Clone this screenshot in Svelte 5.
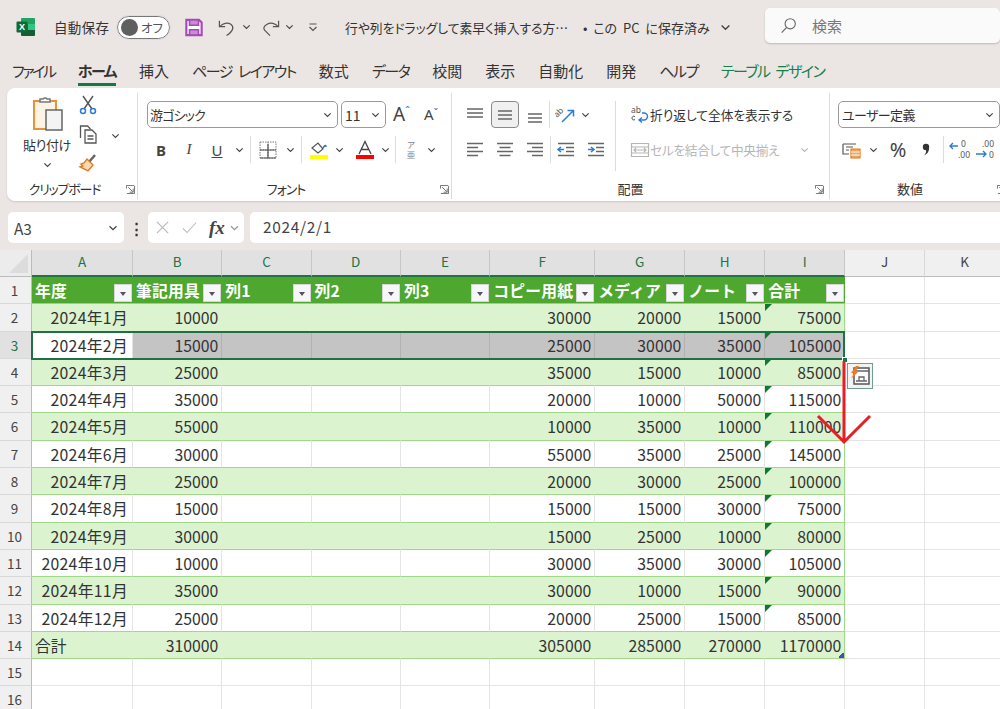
<script>
  const columns = [
    { id: 'A', on: true }, { id: 'B', on: true }, { id: 'C', on: true }, { id: 'D', on: true },
    { id: 'E', on: true }, { id: 'F', on: true }, { id: 'G', on: true }, { id: 'H', on: true },
    { id: 'I', on: true }, { id: 'J', on: false }, { id: 'K', on: false }
  ];
  const heads = ['年度', '筆記用具', '列1', '列2', '列3', 'コピー用紙', 'メディア', 'ノート', '合計'];
  const rows = [
    ['2024年1月', 10000, 30000, 20000, 15000, 75000],
    ['2024年2月', 15000, 25000, 30000, 35000, 105000],
    ['2024年3月', 25000, 35000, 15000, 10000, 85000],
    ['2024年4月', 35000, 20000, 10000, 50000, 115000],
    ['2024年5月', 55000, 10000, 35000, 10000, 110000],
    ['2024年6月', 30000, 55000, 35000, 25000, 145000],
    ['2024年7月', 25000, 20000, 30000, 25000, 100000],
    ['2024年8月', 15000, 15000, 15000, 30000, 75000],
    ['2024年9月', 30000, 15000, 25000, 10000, 80000],
    ['2024年10月', 10000, 30000, 35000, 30000, 105000],
    ['2024年11月', 35000, 30000, 10000, 15000, 90000],
    ['2024年12月', 25000, 20000, 25000, 15000, 85000]
  ];
  const total = ['合計', 310000, 305000, 285000, 270000, 1170000];
  const tabs = [
    { label: 'ファイル', kana: true },
    { label: 'ホーム', kana: true, active: true },
    { label: '挿入' },
    { label: 'ページ レイアウト', kana: true },
    { label: '数式' },
    { label: 'データ', kana: true },
    { label: '校閲' },
    { label: '表示' },
    { label: '自動化' },
    { label: '開発' },
    { label: 'ヘルプ', kana: true },
    { label: 'テーブル デザイン', kana: true, design: true }
  ];

  // table columns: label, B, C, D, E, F, G, H, I
  function cells(r) {
    return [r[0], r[1], '', '', '', r[2], r[3], r[4], r[5]];
  }
</script>

{#snippet chev()}
  <svg class="chev" viewBox="0 0 10 6"><path d="M1.5 1.2 5 4.6l3.5-3.4" /></svg>
{/snippet}

{#snippet lines(kind)}
  <svg class="ico" viewBox="0 0 20 20">
    {#if kind === 'top'}
      <path class="ln" d="M2 4h16M2 8h16M2 12h16" />
    {:else if kind === 'mid'}
      <path class="ln" d="M3 6h14M3 10h14M3 14h14" />
    {:else if kind === 'bot'}
      <path class="ln" d="M3 9h14M3 13h14M3 17h14" />
    {:else if kind === 'left'}
      <path class="ln" d="M2 3.500h16M2 7.500h11M2 11.500h16M2 15.500h11" />
    {:else if kind === 'center'}
      <path class="ln" d="M2 3.500h16M4.500 7.500h11M2 11.500h16M4.500 15.500h11" />
    {:else}
      <path class="ln" d="M2 3.500h16M7 7.500h11M2 11.500h16M7 15.500h11" />
    {/if}
  </svg>
{/snippet}

{#snippet launcher()}
  <svg class="launch" viewBox="0 0 10 10"><path d="M.5 4V.5H9M2.500 2.500l5 5M4 8h4V4M9.500 1v8.500H1" /></svg>
{/snippet}

<div class="app">
  <header class="title">
    <svg class="xl" viewBox="0 0 20 20">
      <path fill="#21a366" d="M6 1h12a1 1 0 0 1 1 1v5H5V2a1 1 0 0 1 1-1z" />
      <path fill="#107c41" d="M5 7h7v6H5z" />
      <path fill="#33c481" d="M12 7h7v6h-7z" />
      <path fill="#185c37" d="M5 13h14v5a1 1 0 0 1-1 1H6a1 1 0 0 1-1-1z" />
      <rect x="0.500" y="4.500" width="11" height="11" rx="1" fill="#0d6b3a" />
      <text x="6" y="13" class="xl-x">X</text>
    </svg>
    <span class="autosave">自動保存</span>
    <span class="toggle"><i></i><b>オフ</b></span>
    <svg class="save" viewBox="0 0 20 20">
      <path d="M1.500 1.500h14l3 3v14h-17z" fill="#fff" stroke="#a54bb4" stroke-width="2.400" />
      <path d="M5 1.500h10v6H5zM5 12.500h10v6H5z" fill="#c98ed2" stroke="#a54bb4" stroke-width="1.800" />
    </svg>
    <svg class="qa undo" viewBox="0 0 20 20"><path d="M1.500 3v6h6M2 9c3-3.500 8-4.500 11.500-2.500 3.500 2.500 3 7-4.500 12" /></svg>
    <span class="qa-chev">{@render chev()}</span>
    <svg class="qa redo" viewBox="0 0 20 20"><path d="M18.500 3v6h-6M18 9c-3-3.500-8-4.500-11.500-2.500C3 8.500 2 11 4 13l5.500 5.500" /></svg>
    <span class="qa-chev">{@render chev()}</span>
    <svg class="custom" viewBox="0 0 10 10"><path d="M1.500 2h7M1.500 5 5 8.500 8.500 5" /></svg>
    <span class="doc">行や列をドラッグして素早く挿入する方…</span>
    <span class="saved">• この PC に保存済み {@render chev()}</span>
    <div class="search">
      <svg viewBox="0 0 20 20"><circle cx="12" cy="8" r="6" /><path d="M7.500 12.500 2 18.500" /></svg>
      <span>検索</span>
    </div>
  </header>

  <nav class="tabs">
    {#each tabs as tab}
      <span class:active={tab.active} class:kana={tab.kana} class:design={tab.design}>{tab.label}</span>
    {/each}
  </nav>

  <section class="ribbon">
    <div class="group clip">
      <div class="body clip-body">
        <div class="paste">
          <svg viewBox="0 0 34 36">
            <path d="M4 5h22v28H4z" fill="#fdf3e4" stroke="#e8913a" stroke-width="2" />
            <path d="M10 6V3h3a2.500 2.500 0 0 1 4 0h3v3z" fill="#fff" stroke="#777" stroke-width="1.500" />
            <rect x="16" y="14" width="16" height="20" fill="#f4f4f4" stroke="#666" stroke-width="1.500" />
          </svg>
          <span>貼り付け</span>
          {@render chev()}
        </div>
        <div class="clip-small">
          <svg viewBox="0 0 20 20" class="ico">
            <path d="M5 1l9 13M15 1 6 14" fill="none" stroke="#555" stroke-width="1.400" />
            <circle cx="5" cy="16" r="2.500" fill="none" stroke="#2b7cd3" stroke-width="1.500" />
            <circle cx="15" cy="16" r="2.500" fill="none" stroke="#2b7cd3" stroke-width="1.500" />
          </svg>
          <svg viewBox="0 0 20 20" class="ico">
            <path d="M2.500 14V2h7l3 3" fill="none" stroke="#555" stroke-width="1.300" />
            <path d="M7 6h7l4 4v9H7zM9.500 12h6M9.500 15h6" fill="#fff" stroke="#555" stroke-width="1.300" />
          </svg>
          <svg viewBox="0 0 20 20" class="ico">
            <path d="M11 9l6-7" stroke="#666" stroke-width="2.500" />
            <path d="M9 6l6 6-5 6-8-4 3-1-2-2 3-1z" fill="#fbd9b5" stroke="#e07b1f" stroke-width="1.400" />
          </svg>
        </div>
        <span class="clip-chev">{@render chev()}</span>
      </div>
      <div class="foot">クリップボード {@render launcher()}</div>
    </div>

    <div class="group font">
      <div class="body stack">
        <div class="row">
          <div class="select font-name"><span>游ゴシック</span>{@render chev()}</div>
          <div class="select font-size"><span>11</span>{@render chev()}</div>
          <span class="grow big">A<sup>ˆ</sup></span>
          <span class="grow small">A<sup>ˇ</sup></span>
        </div>
        <div class="row lower">
          <span class="t letter bold">B</span>
          <span class="t letter ital">I</span>
          <span class="t letter under">U</span>
          <span class="c">{@render chev()}</span>
          <i class="sep"></i>
          <span class="t">
            <svg class="ico" viewBox="0 0 20 20">
              <path d="M2 2h16v16H2zM10 2v16M2 10h16" fill="none" stroke="#777" stroke-width="1" stroke-dasharray="1.500 1" />
              <path d="M2 18h16M10 4v14M2 10h16" stroke="#555" stroke-width="1.200" />
            </svg>
          </span>
          <span class="c">{@render chev()}</span>
          <i class="sep"></i>
          <span class="t">
            <svg class="ico" viewBox="0 0 20 20">
              <path d="M3 8l6-5 5 6-5 4z" fill="#fff" stroke="#555" stroke-width="1.200" />
              <path d="M14 8c2-3 3-3 3-1" fill="none" stroke="#2b7cd3" stroke-width="1.600" />
              <path d="M1 15h18v4H1z" fill="#ffff00" />
            </svg>
          </span>
          <span class="c narrow">{@render chev()}</span>
          <span class="t gap-l">
            <svg class="ico" viewBox="0 0 20 20">
              <path d="M4 14 10 1.500 16 14M6.500 9.500h7" fill="none" stroke="#444" stroke-width="1.300" />
              <path d="M1 15h18v4H1z" fill="#f00" />
            </svg>
          </span>
          <span class="c narrow">{@render chev()}</span>
          <i class="sep"></i>
          <span class="t phon"><small>ア</small><small>亜</small></span>
          <span class="c">{@render chev()}</span>
        </div>
      </div>
      <div class="foot">フォント {@render launcher()}</div>
    </div>

    <div class="group align">
      <div class="body split">
        <div class="stack left-part">
          <div class="row">
            <span class="t w30">{@render lines('top')}</span>
            <span class="t w28 pressed">{@render lines('mid')}</span>
            <span class="t w30">{@render lines('bot')}</span>
            <i class="sep tight"></i>
            <span class="t w30">
              <svg class="ico" viewBox="0 0 20 20">
                <text x="2" y="13" class="orient" transform="rotate(-45 2 13)">ab</text>
                <path d="M7 17 18 6M12.500 5.500H18.500V11.500" fill="none" stroke="#2b7cd3" stroke-width="1.500" />
              </svg>
            </span>
            <span class="c pull">{@render chev()}</span>
          </div>
          <div class="row lower">
            <span class="t w30">{@render lines('left')}</span>
            <span class="t w30">{@render lines('center')}</span>
            <span class="t w30">{@render lines('right')}</span>
            <i class="sep tight"></i>
            <span class="t w30">
              <svg class="ico" viewBox="0 0 20 20">
                <path class="ln" d="M2 3.500h16M10 7.500h8M10 11.500h8M2 15.500h16" />
                <path d="M8 9.500H2M5 7 2 9.500 5 12" fill="none" stroke="#2b7cd3" stroke-width="1.500" />
              </svg>
            </span>
            <span class="t w30">
              <svg class="ico" viewBox="0 0 20 20">
                <path class="ln" d="M2 3.500h16M10 7.500h8M10 11.500h8M2 15.500h16" />
                <path d="M2 9.500h6M5 7l3 2.500L5 12" fill="none" stroke="#2b7cd3" stroke-width="1.500" />
              </svg>
            </span>
          </div>
        </div>
        <i class="sep tall"></i>
        <div class="stack right-part">
          <div class="row wrap">
            <svg class="ico" viewBox="0 0 20 20">
              <text x="1" y="8" class="orient">ab</text>
              <path d="M5 11.500c-2-1-3 .5-3 1.500s1 3 3 1.500" fill="none" stroke="#555" stroke-width="1" />
              <path d="M9 15h5a3.500 3.500 0 0 0 0-7h-2M12 12.500 9 15l3 2.500" fill="none" stroke="#2b7cd3" stroke-width="1.400" />
            </svg>
            <span>折り返して全体を表示する</span>
          </div>
          <div class="row lower merge">
            <svg class="ico" viewBox="0 0 20 20">
              <path d="M1.500 3.500h17v13h-17zM1.500 7h17M1.500 13h17M4 10h12M6 8l-2 2 2 2M14 8l2 2-2 2" fill="none" stroke="#b5b5b5" stroke-width="1.200" />
            </svg>
            <span>セルを結合して中央揃え</span>
            {@render chev()}
          </div>
        </div>
      </div>
      <div class="foot">配置 {@render launcher()}</div>
    </div>

    <div class="group number">
      <div class="body stack">
        <div class="row"><div class="select fmt"><span>ユーザー定義</span>{@render chev()}</div></div>
        <div class="row lower">
          <span class="t">
            <svg class="ico" viewBox="0 0 20 20">
              <path d="M1 4h13M1 4v10h6M4 7h7M4 10h3" fill="none" stroke="#555" stroke-width="1.200" />
              <path d="M9 9h9v9H9z" fill="#f2a65e" stroke="#e07b1f" stroke-width="1.200" />
              <path d="M9 12h9M9 15h9" stroke="#fff" />
            </svg>
          </span>
          <span class="c tiny">{@render chev()}</span>
          <span class="t pct">%</span>
          <span class="t">
            <svg class="ico" viewBox="0 0 20 20">
              <circle cx="10" cy="7" r="3.200" fill="#333" />
              <path d="M13 7c.5 4-1.500 7-5 8.500 2-2 2.500-4 2-6z" fill="#333" />
            </svg>
          </span>
          <i class="sep"></i>
          <span class="t w26">
            <svg viewBox="0 0 22 22" class="dec-ico">
              <path d="M9 7H1M4 4 1 7l3 3" fill="none" stroke="#2b7cd3" stroke-width="1.400" />
              <text x="12" y="8">0</text><text x="9" y="19">.00</text>
            </svg>
          </span>
          <span class="t w26">
            <svg viewBox="0 0 22 22" class="dec-ico">
              <text x="7" y="8">.00</text><text x="14" y="19">0</text>
              <path d="M1 15h10M8 12l3 3-3 3" fill="none" stroke="#2b7cd3" stroke-width="1.400" />
            </svg>
          </span>
        </div>
      </div>
      <div class="foot">数値 {@render launcher()}</div>
    </div>
  </section>

  <section class="formula">
    <div class="box name"><span>A3</span>{@render chev()}</div>
    <span class="dots">⋮</span>
    <div class="box fx">
      <svg viewBox="0 0 16 16"><path d="M2 2l12 12M14 2 2 14" /></svg>
      <svg viewBox="0 0 18 16"><path d="M1 9l5 5L17 2" /></svg>
      <em>fx</em>
      {@render chev()}
    </div>
    <div class="box value"><span>2024/2/1</span></div>
  </section>

  <section class="sheet">
    <div class="corner"><i></i></div>
    {#each columns as col}
      <div class="colhead" class:on={col.on}>{col.id}</div>
    {/each}

    <div class="rowhead">1</div>
    {#each heads as head, i}
      <div class="th" class:end={i === 8}>
        <span>{head}</span>
        <i class="filter"></i>
      </div>
    {/each}
    <div class="gc"></div>
    <div class="gc"></div>

    {#each rows as row, r}
      <div class="rowhead" class:on={r === 1}>{r + 2}</div>
      {#each cells(row) as value, c}
        <div
          class="td"
          class:band={r % 2 === 0}
          class:sel={r === 1 && c > 0}
          class:active={r === 1 && c === 0}
          class:date={c === 0}
          class:end={c === 8}
          class:flag={c === 8}
        >{value}</div>
      {/each}
      <div class="gc"></div>
      <div class="gc"></div>
    {/each}

    <div class="rowhead">14</div>
    {#each cells(total) as value, c}
      <div class="td band last" class:lbl={c === 0} class:end={c === 8} class:grip={c === 8}>{value}</div>
    {/each}
    <div class="gc"></div>
    <div class="gc"></div>

    {#each [15, 16] as n}
      <div class="rowhead">{n}</div>
      {#each columns as col}
        <div class="gc"></div>
      {/each}
    {/each}

    <i class="selection"></i>
    <i class="fill-handle"></i>
    <svg class="quick" viewBox="0 0 26 26">
      <rect x="0.500" y="0.500" width="25" height="25" fill="#f3f3f3" stroke="#6f9f8a" />
      <path d="M7 5h15v16H7z" fill="#fff" stroke="#555" stroke-width="1.500" />
      <path d="M7 8h15M9 18h11M12 18v-4h5v4" fill="none" stroke="#666" stroke-width="1.300" />
      <path d="M9 3 4 10h3l-3 6 8-8H9l3-5z" fill="#ed7d1f" />
    </svg>
    <svg class="arrow" viewBox="0 0 60 90">
      <path d="M29 0v81M3 55l26 26 26-26" />
    </svg>
  </section>
</div>

<style>
  :global(body) {
    margin: 0;
    background: #ebe6e3;
  }

  .app {
    width: 1000px;
    height: 709px;
    overflow: hidden;
    background: #ebe6e3;
    color: #333;
    font-family: "Noto Sans CJK JP", "Noto Sans", sans-serif;
  }

  svg {
    display: block;
    flex: none;
  }

  .chev {
    width: 9px;
    height: 6px;
    fill: none;
    stroke: #444;
    stroke-width: 1.300;
  }

  .ico {
    width: 20px;
    height: 20px;
  }

  .ln {
    fill: none;
    stroke: #666;
    stroke-width: 1.300;
  }

  /* title bar */
  .title {
    height: 54px;
    display: flex;
    align-items: center;
    font-size: 13.500px;
    padding-left: 16px;
    font-feature-settings: "palt";
  }

  .title > * {
    flex: none;
  }

  .xl {
    width: 20px;
    height: 20px;
    margin-right: 18px;
  }

  .xl-x {
    font: bold 9px "Liberation Sans", sans-serif;
    fill: #fff;
    text-anchor: middle;
  }

  .autosave {
    width: 63px;
    letter-spacing: 0.300px;
  }

  .toggle {
    width: 53px;
    height: 23px;
    box-sizing: border-box;
    border: 1px solid #777;
    border-radius: 12px;
    background: #fff;
    display: flex;
    align-items: center;
    padding: 0 6px 0 3px;
    justify-content: space-between;
    outline: 1px solid #ddd;
  }

  .toggle i {
    width: 17px;
    height: 17px;
    border-radius: 50%;
    background: #5f5f5f;
  }

  .toggle b {
    font-weight: 400;
    font-size: 12.500px;
    color: #555;
  }

  .save {
    width: 18px;
    height: 19px;
    margin-left: 15px;
  }

  .qa {
    width: 19px;
    height: 19px;
    fill: none;
    stroke: #555;
    stroke-width: 1.300;
  }

  .undo {
    margin-left: 15px;
  }

  .redo {
    margin-left: 10px;
  }

  .qa-chev {
    margin-left: 5px;
  }

  .custom {
    width: 10px;
    height: 10px;
    margin-left: 14px;
    fill: none;
    stroke: #555;
    stroke-width: 1.200;
  }

  .doc {
    margin-left: 27px;
    width: 238px;
    font-size: 12.800px;
    white-space: nowrap;
  }

  .saved {
    width: 182px;
    font-size: 13px;
    display: flex;
    align-items: center;
    gap: 4px;
    white-space: pre;
    word-spacing: 3px;
  }

  .saved .chev {
    width: 11px;
    height: 7px;
  }

  .search {
    width: 235px;
    height: 35px;
    margin-top: -3px;
    background: #fafafa;
    border-radius: 5px;
    box-shadow: 0 1px 2px #0003;
    display: flex;
    align-items: center;
    padding-left: 15px;
    box-sizing: border-box;
    gap: 15px;
    color: #777;
    font-size: 15px;
  }

  .search svg {
    width: 17px;
    height: 17px;
    fill: none;
    stroke: #666;
    stroke-width: 1.300;
  }

  /* tabs */
  .tabs {
    height: 34px;
    display: flex;
    gap: 23px;
    padding-left: 12px;
    font-size: 15px;
    line-height: 33px;
    white-space: nowrap;
    font-feature-settings: "palt";
  }

  .tabs .kana {
    letter-spacing: -1.500px;
    word-spacing: 4px;
  }

  .tabs .kana:first-child {
    letter-spacing: -2.300px;
  }

  .tabs .active {
    font-weight: 700;
    position: relative;
  }

  .tabs .active::after {
    content: '';
    position: absolute;
    left: 0;
    right: 0;
    bottom: 2px;
    height: 3px;
    background: #107c41;
  }

  .tabs .design {
    color: #17804a;
  }

  /* ribbon */
  .ribbon {
    height: 113px;
    margin-left: 7px;
    width: 1010px;
    background: #fff;
    border-radius: 8px;
    box-shadow: 0 1px 2px #0002;
    display: flex;
    padding-top: 5px;
    box-sizing: border-box;
    overflow: hidden;
    font-feature-settings: "palt";
  }

  .group {
    display: flex;
    flex-direction: column;
    flex: none;
    box-sizing: border-box;
    height: 106px;
    border-right: 1px solid #dcdcdc;
  }

  .clip { width: 131px; }
  .font { width: 314px; padding-left: 9px; }
  .align { width: 378px; padding-left: 8px; }
  .number { width: 187px; padding-left: 8px; border-right: 0; }

  .body {
    height: 87px;
  }

  .foot {
    position: relative;
    text-align: center;
    font-size: 13px;
    line-height: 20px;
  }

  .clip .foot { padding-right: 15px; letter-spacing: -1.200px; }
  .font .foot { padding-right: 26px; letter-spacing: -1px; }
  .align .foot { padding-right: 28px; }
  .number .foot { padding-right: 35px; }

  .launch {
    position: absolute;
    right: 2px;
    top: 6px;
    width: 9px;
    height: 9px;
    fill: none;
    stroke: #666;
    stroke-width: 1;
  }

  .align .launch { right: 5px; }
  .number .launch { right: 11px; }

  .stack {
    display: flex;
    flex-direction: column;
    padding-top: 8px;
    box-sizing: border-box;
    gap: 8px;
  }

  .row {
    display: flex;
    align-items: center;
    height: 27px;
  }

  .sep {
    width: 1px;
    height: 27px;
    background: #dcdcdc;
    margin: 0 3px;
    flex: none;
  }

  .sep.tight {
    margin: 0;
  }

  .sep.tall {
    height: 70px;
    margin: 8px 4px 0 3px;
  }

  .t, .c {
    display: flex;
    align-items: center;
    justify-content: center;
    height: 27px;
    flex: none;
  }

  .t { width: 28px; }
  .c { width: 16px; }
  .c.narrow { width: 13px; }
  .c.tiny { width: 14px; }
  .c.pull { margin-left: -3px; }
  .w26 { width: 26px; }
  .w28 { width: 28px; }
  .w30 { width: 30px; }
  .gap-l { margin-left: 5px; }

  .pressed {
    background: #f0f0f0;
    box-sizing: border-box;
    border: 1px solid #8a8a8a;
    border-radius: 4px;
    margin: 0 1px;
  }

  .row:first-child .pressed + .w30 {
    width: 29px;
  }

  .select {
    height: 27px;
    box-sizing: border-box;
    border: 1px solid #9a9a9a;
    border-radius: 5px;
    display: flex;
    align-items: center;
    justify-content: space-between;
    padding: 0 5px 0 3px;
    font-size: 13px;
    flex: none;
  }

  .font-name { width: 191px; padding-left: 2px; letter-spacing: -0.800px; }
  .font-size { width: 45px; margin-left: 3px; font-size: 14px; }
  .fmt { width: 162px; margin-right: -10px; letter-spacing: -0.600px; }

  .grow {
    font-family: "Noto Sans", sans-serif;
    color: #444;
    line-height: 1;
    display: flex;
  }

  .grow sup {
    color: #2b7cd3;
    font-size: 11px;
    line-height: 1;
  }

  .big {
    font-size: 19px;
    margin-left: 7px;
    width: 30px;
  }

  .small {
    font-size: 15px;
    margin-left: 1px;
  }

  .letter {
    font-family: "Liberation Serif", serif;
    font-size: 15px;
    color: #444;
  }

  .bold {
    font-family: "Noto Sans", sans-serif;
    font-weight: 700;
  }

  .ital {
    font-style: italic;
  }

  .under {
    font-family: "Noto Sans", sans-serif;
    text-decoration: underline;
  }

  .phon {
    flex-direction: column;
    width: 24px;
    color: #888;
    gap: 1px;
  }

  .phon small {
    font-size: 8.500px;
    line-height: 9px;
    display: block;
  }

  /* clipboard */
  .clip-body {
    display: flex;
  }

  .paste {
    width: 71px;
    box-sizing: border-box;
    padding-left: 9px;
    display: flex;
    flex-direction: column;
    align-items: center;
    font-size: 13px;
    letter-spacing: -0.400px;
    white-space: nowrap;
  }

  .paste svg:first-child {
    width: 34px;
    height: 36px;
    margin-top: 3px;
  }

  .paste span {
    margin-top: 2px;
    line-height: 22px;
  }

  .paste .chev {
    margin-top: 6px;
  }

  .clip-small {
    display: flex;
    flex-direction: column;
    gap: 9px;
    padding-top: 2px;
  }

  .clip-chev {
    margin: 40px 0 0 13px;
  }

  /* alignment */
  .split {
    display: flex;
  }

  .left-part {
    width: 152px;
  }

  .right-part {
    width: 200px;
    padding-left: 10px;
  }

  .wrap, .merge {
    font-size: 12.700px;
    white-space: nowrap;
  }

  .merge {
    color: #b5b5b5;
    letter-spacing: -0.300px;
  }

  .merge .chev {
    stroke: #b5b5b5;
    margin-left: 21px;
  }

  .orient {
    font: 8.500px "Noto Sans", sans-serif;
    fill: #555;
  }

  .pct {
    font: 20px "Noto Sans", sans-serif;
    color: #444;
    margin-left: 4px;
  }

  .dec-ico {
    width: 24px;
    height: 22px;
  }

  .dec-ico text {
    font: 8.500px "Noto Sans", sans-serif;
    fill: #555;
  }

  /* formula bar */
  .formula {
    display: flex;
    align-items: center;
    height: 31px;
    margin: 11px 0 7px 8px;
  }

  .box {
    height: 31px;
    box-sizing: border-box;
    background: #fff;
    border-radius: 5px;
    display: flex;
    align-items: center;
    flex: none;
  }

  .name {
    width: 116px;
    justify-content: space-between;
    padding: 0 6px;
    font-size: 15.400px;
    color: #444;
  }

  .name .chev {
    width: 10px;
  }

  .dots {
    width: 24px;
    flex: none;
    text-align: center;
    font-weight: 700;
    font-size: 15px;
  }

  .fx {
    width: 96px;
    gap: 12px;
    padding-left: 7px;
  }

  .fx svg:nth-child(-n+2) {
    width: 15px;
    height: 15px;
    fill: none;
    stroke: #bbb;
    stroke-width: 1.300;
  }

  .fx em {
    font: italic 700 19px "Liberation Serif", serif;
    color: #444;
  }

  .fx .chev {
    width: 11px;
    stroke: #999;
    margin-left: -8px;
  }

  .value {
    width: 760px;
    margin-left: 6px;
    padding-left: 13px;
    font-size: 15.400px;
    letter-spacing: 0.700px;
    color: #444;
  }

  .value span {
    margin-top: -3px;
  }

  /* sheet */
  .sheet {
    position: relative;
    display: grid;
    grid-template-columns: 32px 101px 89.300px 89.300px 89.300px 89.300px 105px 90px 80px 80px 80px 80px;
    grid-template-rows: 27px repeat(16, 27.300px);
    width: 1000px;
    height: 459px;
    overflow: hidden;
    background: #fff;
    font-size: 15.800px;
  }

  .corner {
    background: #ececec;
    border-right: 1px solid #bbb;
    border-bottom: 1px solid #bbb;
    box-sizing: border-box;
    position: relative;
  }

  .corner i {
    position: absolute;
    right: 3px;
    bottom: 3px;
    border-style: solid;
    border-width: 0 0 19px 19px;
    border-color: transparent transparent #dcdcdc transparent;
  }

  .colhead {
    background: #f0f0f0;
    border-right: 1px solid #d8d8d8;
    border-bottom: 1px solid #bbb;
    box-sizing: border-box;
    text-align: center;
    line-height: 22px;
    font-size: 13.500px;
    color: #444;
  }

  .colhead.on {
    background: #e1e1e1;
    color: #217346;
    border-right-color: #c6c6c6;
    border-bottom: 2px solid #217346;
  }

  .rowhead {
    background: #f0f0f0;
    border-right: 1px solid #bbb;
    border-bottom: 1px solid #d8d8d8;
    box-sizing: border-box;
    text-align: center;
    line-height: 27px;
    font-size: 13.500px;
    color: #444;
    padding-right: 2px;
  }

  .rowhead.on {
    background: #e1e1e1;
    color: #217346;
  }

  .th {
    background: #4ea72e;
    color: #fff;
    font-weight: 700;
    font-size: 15.800px;
    line-height: 27px;
    padding-left: 3px;
    box-sizing: border-box;
    position: relative;
    white-space: nowrap;
    overflow: visible;
    border-bottom: 1px solid #8ed973;
    letter-spacing: 0.200px;
  }

  .filter {
    position: absolute;
    right: 1px;
    bottom: 1px;
    width: 18px;
    height: 18px;
    box-sizing: border-box;
    border: 1px solid #d6d6d6;
    background: #f7f7fb;
  }

  .filter::after {
    content: '';
    position: absolute;
    left: 5px;
    top: 7px;
    border-style: solid;
    border-width: 4px 3.500px 0;
    border-color: #555 transparent transparent;
  }

  .td {
    position: relative;
    box-sizing: border-box;
    text-align: right;
    padding-right: 3px;
    line-height: 27px;
    border-right: 1px solid #e4e4e4;
    border-bottom: 1px solid #9ed888;
    white-space: nowrap;
    color: #333;
  }

  .td.date {
    padding-right: 4px;
    letter-spacing: 0.300px;
  }

  .td.band {
    background: #dcf3d0;
    border-right-color: #dcf3d0;
  }

  .td.sel {
    background: #c4c4c4;
    border-right-color: #b2b2b2;
  }

  .td.active {
    background: #fff;
  }

  .td.end {
    border-right: 1px solid #9ed888;
  }

  .td.lbl {
    text-align: left;
    padding-left: 3px;
  }

  .td.flag::before {
    content: '';
    position: absolute;
    left: 0;
    top: 0;
    border-style: solid;
    border-width: 7px 7px 0 0;
    border-color: #0e7a2f transparent transparent;
  }

  .td.grip::after {
    content: '';
    position: absolute;
    right: 0;
    bottom: 0;
    width: 5px;
    height: 5px;
    background: linear-gradient(135deg, transparent 35%, #3f51b5 35%);
  }

  .gc {
    box-sizing: border-box;
    border-right: 1px solid #e4e4e4;
    border-bottom: 1px solid #e4e4e4;
  }

  .selection {
    position: absolute;
    left: 31px;
    top: 81.300px;
    width: 814px;
    height: 29px;
    box-sizing: border-box;
    border: 2px solid #1f7145;
  }

  .fill-handle {
    position: absolute;
    left: 842px;
    top: 107px;
    width: 6px;
    height: 6px;
    background: #1f7145;
    border: 1px solid #fff;
    box-sizing: border-box;
  }

  .quick {
    position: absolute;
    left: 847px;
    top: 113px;
    width: 26px;
    height: 26px;
  }

  .arrow {
    position: absolute;
    left: 815px;
    top: 111px;
    width: 60px;
    height: 90px;
    fill: none;
    stroke: #ed1c24;
    stroke-width: 3;
  }
</style>
